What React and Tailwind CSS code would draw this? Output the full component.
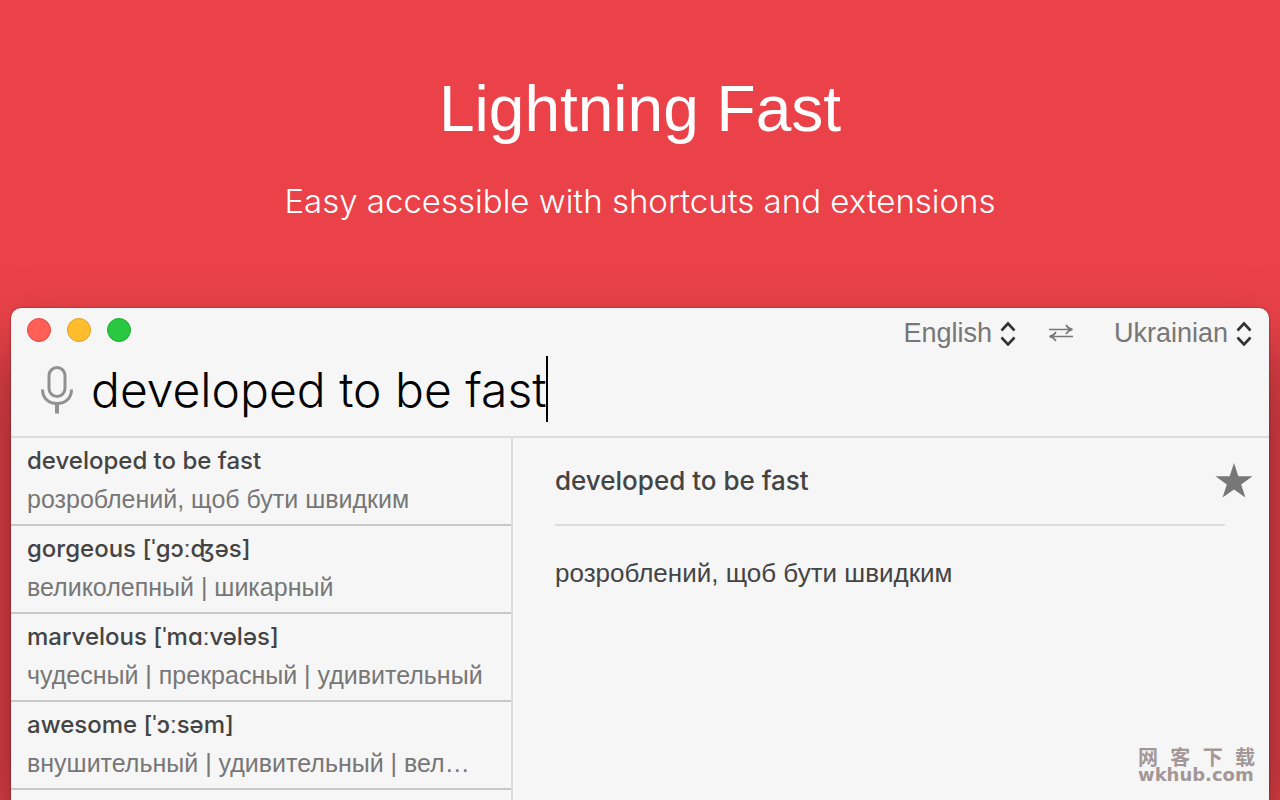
import React from "react";
import { useState } from "react";

const history = [
  { title: "developed to be fast", text: "розроблений, щоб бути швидким" },
  { title: "gorgeous [ˈgɔːʤəs]", text: "великолепный | шикарный" },
  { title: "marvelous [ˈmɑːvələs]", text: "чудесный | прекрасный | удивительный" },
  { title: "awesome [ˈɔːsəm]", text: "внушительный | удивительный | вел…" },
];

function LanguageSelect({ label, value, onChange }) {
  return (
    <label className="flex items-center gap-2">
      <select
        aria-label={label}
        value={value}
        onChange={(e) => onChange(e.target.value)}
        className="appearance-none [field-sizing:content] bg-transparent text-[27px] leading-8 text-[#777777] outline-none"
      >
        <option>English</option>
        <option>Ukrainian</option>
      </select>
      <svg
        viewBox="0 0 16 26"
        className="w-4 h-[26px] fill-none stroke-[#333333]"
        strokeWidth="2.6"
      >
        <path d="M1.5 10.5 L8 3.5 L14.5 10.5 M1.5 17.5 L8 24.5 L14.5 17.5" />
      </svg>
    </label>
  );
}

function App() {
  const [query, setQuery] = useState("developed to be fast");
  const [from, setFrom] = useState("English");
  const [to, setTo] = useState("Ukrainian");

  const swapLanguages = () => {
    setFrom(to);
    setTo(from);
  };

  return (
    <div className="h-screen overflow-hidden flex flex-col bg-[#eb4249] font-['Liberation_Sans',Arial,sans-serif]">
      {/* HEADER */}
      <header className="h-[308px] shrink-0 pt-[73px] text-center text-white">
        <h1 className="text-[64px] leading-[72px]">Lightning Fast</h1>
        <p className="mt-[30px] text-[33px] leading-[52px] font-light font-[Inter,sans-serif]">
          Easy accessible with shortcuts and extensions
        </p>
      </header>

      {/* WINDOW */}
      <main className="relative flex-1 min-h-0 mx-[11px] flex flex-col rounded-t-[10px] bg-[#f6f6f6] shadow-[0_0_2px_rgba(0,0,0,0.5),0_40px_70px_rgba(0,0,0,0.5)]">
        <div className="h-[130px] shrink-0 border-b-2 border-[#dddddd]">
          <div className="flex items-start justify-between pl-4 pr-[17px] pt-[9px]">
            <div className="flex gap-4 pt-px">
              <button
                aria-label="Close"
                className="size-6 rounded-full bg-[#ff5f57] border border-[#e2463f]"
              />
              <button
                aria-label="Minimize"
                className="size-6 rounded-full bg-[#ffbd2e] border border-[#e1a023]"
              />
              <button
                aria-label="Zoom"
                className="size-6 rounded-full bg-[#28c940] border border-[#1fac2c]"
              />
            </div>
            <div className="flex items-center">
              <LanguageSelect label="From" value={from} onChange={setFrom} />
              <button
                aria-label="Swap languages"
                onClick={swapLanguages}
                className="ml-8 mr-10"
              >
                <svg
                  viewBox="0 0 26 18"
                  className="w-[26px] h-[18px] fill-none stroke-[#777777]"
                  strokeWidth="1.6"
                >
                  <path d="M1 5.5 H24 M18 1 Q20 4.5 24.5 5.5 Q20 6.5 18 10" />
                  <path d="M25 12.5 H2 M8 8 Q6 11.5 1.5 12.5 Q6 13.5 8 17" />
                </svg>
              </button>
              <LanguageSelect label="To" value={to} onChange={setTo} />
            </div>
          </div>

          <div className="flex items-center pl-[30px] mt-[7px]">
            <button aria-label="Dictate" className="pt-0.5">
              <svg
                viewBox="0 0 33 48"
                className="w-[33px] h-12 fill-none stroke-[#919191]"
              >
                <rect
                  x="8"
                  y="1.5"
                  width="16"
                  height="29"
                  rx="8"
                  strokeWidth="3"
                />
                <path
                  d="M1.5 23.5 C1.5 32.5 8 37.5 16 37.5 C24 37.5 30.5 32.5 30.5 23.5"
                  strokeWidth="3"
                />
                <path d="M16 38 V47.5" strokeWidth="4" />
              </svg>
            </button>
            <input
              type="text"
              aria-label="Text to translate"
              value={query}
              onChange={(e) => setQuery(e.target.value)}
              className="ml-[17px] pt-0.5 h-[66px] [field-sizing:content] bg-transparent text-[48px] font-light text-black caret-transparent outline-none font-[Inter,sans-serif]"
            />
            <span className="w-0.5 h-[66px] bg-black" />
          </div>
        </div>

        <div className="flex-1 min-h-0 flex">
          {/* HISTORY */}
          <ul className="w-[502px] shrink-0 border-r-2 border-[#dddddd] overflow-hidden">
            {history.map((item) => (
              <li
                key={item.title}
                className="h-[88px] pl-4 pr-6 pt-1 border-b-2 border-[#c8c8c8]"
              >
                <p className="text-[24px] leading-[38px] font-medium text-[#444444] truncate font-[Inter,'Liberation_Sans',sans-serif]">
                  {item.title}
                </p>
                <p className="text-[25px] leading-[38px] text-[#777777] truncate">
                  {item.text}
                </p>
              </li>
            ))}
          </ul>

          {/* TRANSLATION */}
          <section className="flex-1 min-w-0 pl-[42px] text-[#444444]">
            <div className="flex items-center justify-between h-[86px] pr-4">
              <h2 className="text-[26px] leading-8 font-medium font-[Inter,sans-serif]">
                developed to be fast
              </h2>
              <button aria-label="Add to favourites">
                <svg viewBox="0 0 38 36" className="w-[38px] h-9 fill-[#777777]">
                  <path d="M19 0 L23.4 13.2 H37.5 L26.2 21.4 L30.4 34.5 L19 26.4 L7.6 34.5 L11.8 21.4 L0.5 13.2 H14.6 Z" />
                </svg>
              </button>
            </div>
            <hr className="mr-11 border-t-2 border-[#dddddd]" />
            <p className="mt-[31px] text-[26px] leading-8">
              розроблений, щоб бути швидким
            </p>
          </section>
        </div>

        <div className="absolute right-[14px] bottom-[17px] w-[117px] font-bold text-[#a39797]">
          <div className="flex justify-between text-[20px] leading-5 font-['Noto_Sans_CJK_SC',sans-serif]">
            <span>网</span>
            <span>客</span>
            <span>下</span>
            <span>载</span>
          </div>
          <div className="text-[18px] leading-4 font-['DejaVu_Sans',sans-serif]">
            wkhub.com
          </div>
        </div>
      </main>
    </div>
  );
}

export default App;
